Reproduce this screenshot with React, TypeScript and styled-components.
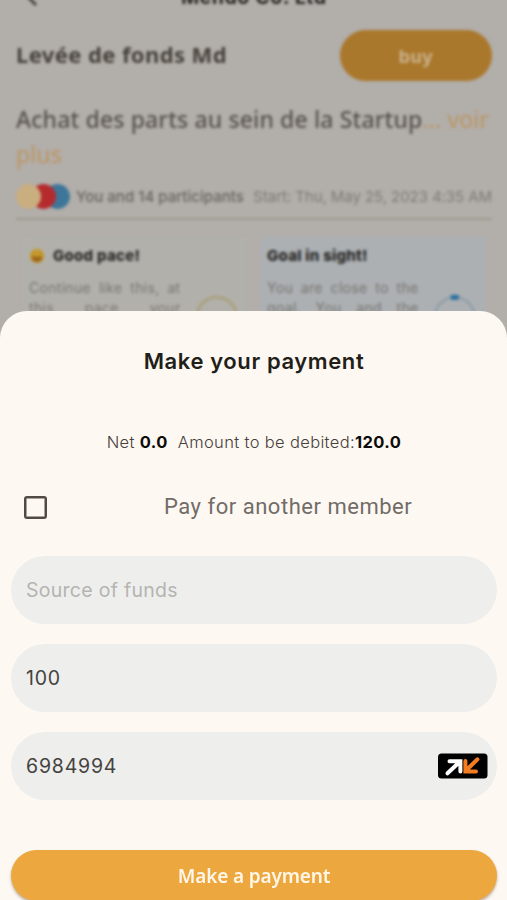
import React from "react";
import styled, { createGlobalStyle } from "styled-components";

const Global = createGlobalStyle`
  * { box-sizing: border-box; }
  body { margin: 0; background: #b2aeaa; font-family: Inter, "Liberation Sans", sans-serif; }
`;

const Screen = styled.div`
  position: relative;
  width: 507px;
  height: 900px;
  overflow: hidden;
  background: #b2aeaa;
`;

const Page = styled.main`
  display: flex;
  flex-direction: column;
  height: 340px;
  padding: 0 15px 0 16px;
  filter: blur(1.4px);
`;

const TopBar = styled.header`
  display: grid;
  grid-template-columns: 30px 1fr 30px;
  height: 30px;
  margin-top: -14px;
  flex-shrink: 0;
`;

const BackIcon = styled.svg`
  width: 24px;
  height: 24px;
  margin-left: 5px;
`;

const PageTitle = styled.div`
  text-align: center;
  font-size: 19px;
  line-height: 24px;
  font-weight: 700;
  letter-spacing: 0.9px;
  color: #24211e;
`;

const CampaignRow = styled.div`
  display: flex;
  justify-content: space-between;
  align-items: center;
  height: 52px;
  margin-top: 14px;
`;

const CampaignName = styled.h1`
  margin: 0 0 3px;
  font: 700 22px/30px "Noto Sans", sans-serif;
  letter-spacing: 0.4px;
  color: #46403a;
`;

const BuyButton = styled.button`
  width: 152px;
  height: 51px;
  padding: 2px 0 0;
  border: 0;
  border-radius: 26px;
  background: #aa782c;
  color: #c9b28d;
  font: 700 18px/24px Inter, sans-serif;
  letter-spacing: 0.4px;
`;

const Description = styled.p`
  margin: 21px 0 0;
  font: 500 23px/35px "Noto Sans", sans-serif;
  letter-spacing: 0.13px;
  white-space: nowrap;
  color: #57514b;
  span { color: #bc9660; font-weight: 400; }
`;

const Meta = styled.div`
  display: flex;
  align-items: center;
  height: 30px;
  margin-top: 9px;
  flex-shrink: 0;
  color: #7f7a76;
  font-size: 15px;
  white-space: nowrap;
`;

const Avatars = styled.div`
  display: flex;
  flex: 0 0 54px;
  margin-right: 6px;
`;

const Avatar = styled.i<{ $color: string; $layer: number }>`
  flex: 0 0 25px;
  height: 25px;
  margin-right: -10.5px;
  border-radius: 50%;
  background: ${(p) => p.$color};
  z-index: ${(p) => p.$layer};
`;

const Participants = styled.span`
  font-weight: 500;
  letter-spacing: 0.02px;
  color: #68635e;
`;

const StartDate = styled.span`
  margin-left: auto;
  font-size: 15px;
  letter-spacing: -0.07px;
`;

const Rule = styled.hr`
  width: 100%;
  height: 2px;
  margin: 7px 0 17px;
  border: 0;
  background: #9f9a8d;
  flex-shrink: 0;
`;

const Cards = styled.div`
  display: grid;
  grid-template-columns: 226px 226px;
  gap: 12px;
  padding-left: 6px;
`;

const Card = styled.section<{ $tone: string }>`
  height: 130px;
  padding: 8px 8px 0 7px;
  border-radius: 4px;
  background: ${(p) => p.$tone};
`;

const CardTitle = styled.h2`
  display: flex;
  align-items: center;
  gap: 8px;
  margin: 0;
  font-size: 15px;
  line-height: 22px;
  font-weight: 800;
  letter-spacing: 0.25px;
  color: #292827;
`;

const CardBody = styled.div`
  display: flex;
  gap: 14px;
  margin-top: 11px;
`;

const CardText = styled.p`
  width: 153px;
  margin: 0;
  font-size: 14px;
  line-height: 20px;
  letter-spacing: 0.3px;
  color: #777570;
  text-align: justify;
  text-align-last: justify;
`;

const Ring = styled.svg`
  width: 46px;
  height: 46px;
  margin-top: 16px;
`;

const Sheet = styled.div`
  position: absolute;
  inset: 311px 0 0;
  display: flex;
  flex-direction: column;
  padding: 0 10px 0 11px;
  border-radius: 27px 27px 0 0;
  background: #fef8f2;
  > * { flex-shrink: 0; }
`;

const SheetTitle = styled.h2`
  margin: 34px 0 0;
  text-align: center;
  font-size: 22px;
  line-height: 32px;
  font-weight: 600;
  letter-spacing: 0.6px;
  color: #221e19;
`;

const Summary = styled.div`
  margin-top: 53px;
  text-align: center;
  white-space: pre;
  font-size: 16.5px;
  line-height: 24px;
  font-weight: 300;
  letter-spacing: 0.35px;
  color: #45403b;
  b { color: #0d0c0b; font-weight: 700; letter-spacing: 0.4px; }
`;

const CheckRow = styled.label`
  display: flex;
  align-items: center;
  height: 50px;
  margin-top: 28px;
  padding-left: 13px;
`;

const CheckBox = styled.span`
  width: 23px;
  height: 23px;
  border: 2px solid #514a43;
  border-radius: 3px;
  box-shadow: inset 0 0 0 0.5px #514a43;
`;

const CheckLabel = styled.span`
  flex: 1;
  margin-left: 24px;
  padding: 0 0 0 93px;
  font: 400 22px/30px Roboto, sans-serif;
  letter-spacing: 0.52px;
  color: #716c67;
  white-space: nowrap;
`;

const Fields = styled.div`
  display: flex;
  flex-direction: column;
  gap: 20px;
  margin-top: 24px;
`;

const Field = styled.div<{ $placeholder?: boolean }>`
  display: flex;
  align-items: center;
  justify-content: space-between;
  height: 68px;
  padding: 0 9px 0 15px;
  border-radius: 34px;
  background: #eeeeed;
  font-size: 19.5px;
  line-height: 28px;
  letter-spacing: ${(p) => (p.$placeholder ? "0.28px" : "0.8px")};
  color: ${(p) => (p.$placeholder ? "#b5b4b2" : "#45423e")};
`;

const OperatorLogo = styled.svg`
  width: 50px;
  height: 26px;
  margin-bottom: 1px;
`;

const PayButton = styled.button`
  height: 51px;
  margin-top: 50px;
  padding: 0;
  border: 0;
  border-radius: 26px;
  background: #eca83e;
  box-shadow: 0 2px 3px rgba(60, 40, 10, 0.35);
  color: #fff6e8;
  font: 600 19px/28px "Noto Sans", sans-serif;
  letter-spacing: -0.15px;
`;

const Grin = () => (
  <svg width="16" height="16" viewBox="0 0 16 16">
    <circle cx="8" cy="8" r="7.2" fill="#c79b2e" />
    <path d="M2.5 8.5h11a5.5 5.5 0 0 1-11 0z" fill="#9c6619" />
    <path d="M3 5.5q1.5-2 3 0M10 5.5q1.5-2 3 0" stroke="#a67820" fill="none" />
  </svg>
);

const OrangeMoney = () => (
  <OperatorLogo viewBox="0 0 50 26">
    <rect x="0" y="0.5" width="49.5" height="25" rx="3.5" fill="#000" />
    <g strokeWidth="4" strokeLinecap="round" fill="none">
      <path d="M9.5 20.3 21.5 9M11.5 8.3h10.9v10.2" stroke="#fff" />
      <path d="M39.5 6.3 28.5 17M27.4 8v10.5h10.6" stroke="#f47b20" />
    </g>
  </OperatorLogo>
);

export default function App() {
  return (
    <Screen>
      <Global />
      <Page>
        <TopBar>
          <BackIcon viewBox="0 0 24 24">
            <path d="M15 5 8 12l7 7" stroke="#3d3834" strokeWidth="2.5" fill="none" />
          </BackIcon>
          <PageTitle>Mendo Co. Ltd</PageTitle>
        </TopBar>
        <CampaignRow>
          <CampaignName>Levée de fonds Md</CampaignName>
          <BuyButton>buy</BuyButton>
        </CampaignRow>
        <Description>
          Achat des parts au sein de la Startup<span>... voir<br />plus</span>
        </Description>
        <Meta>
          <Avatars>
            <Avatar $color="#c9ae7f" $layer={3} />
            <Avatar $color="#b52b2d" $layer={2} />
            <Avatar $color="#3e769a" $layer={1} />
          </Avatars>
          <Participants>You and 14 participants</Participants>
          <StartDate>Start: Thu, May 25, 2023 4:35 AM</StartDate>
        </Meta>
        <Rule />
        <Cards>
          <Card $tone="#b1b0aa">
            <CardTitle><Grin />Good pace!</CardTitle>
            <CardBody>
              <CardText>Continue like this, at<br />this pace your</CardText>
              <Ring viewBox="0 0 46 46">
                <circle cx="23" cy="23" r="20" stroke="#aaa17f" strokeWidth="3" fill="none" />
              </Ring>
            </CardBody>
          </Card>
          <Card $tone="#acb0b3">
            <CardTitle>Goal in sight!</CardTitle>
            <CardBody>
              <CardText>You are close to the<br />goal. You and the</CardText>
              <Ring viewBox="0 0 46 46">
                <circle cx="23" cy="23" r="20" stroke="#899aa5" strokeWidth="2" fill="none" />
                <path d="M19 3.4a20 20 0 0 1 8 0" stroke="#28709e" strokeWidth="5" fill="none" />
              </Ring>
            </CardBody>
          </Card>
        </Cards>
      </Page>
      <Sheet>
        <SheetTitle>Make your payment</SheetTitle>
        <Summary>Net <b>0.0</b>{"  "}Amount to be debited:<b>120.0</b></Summary>
        <CheckRow>
          <CheckBox />
          <CheckLabel>Pay for another member</CheckLabel>
        </CheckRow>
        <Fields>
          <Field $placeholder>Source of funds</Field>
          <Field>100</Field>
          <Field>6984994<OrangeMoney /></Field>
        </Fields>
        <PayButton>Make a payment</PayButton>
      </Sheet>
    </Screen>
  );
}
